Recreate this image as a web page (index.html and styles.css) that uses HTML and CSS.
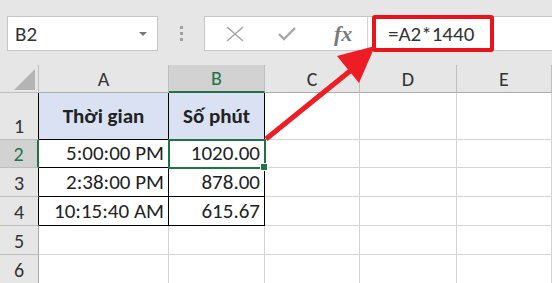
FILE: index.html
```html
<!DOCTYPE html>
<html lang="en">
<head>
    <meta charset="UTF-8">
    <title>Số phút</title>
    <link rel="stylesheet" href="styles.css">
</head>
<body>
    <div class="toolbar">
        <div class="name-box">
            <span>B2</span>
            <span class="caret"></span>
        </div>
        <div class="grip"><i></i><i></i><i></i></div>
        <div class="formula-bar">
            <div class="formula-icons">
                <svg class="icon" width="18" height="16" viewBox="0 0 18 16">
                    <path d="M1 1 L17 15 M17 1 L1 15" stroke="#a6a6a6" stroke-width="1.6" fill="none"/>
                </svg>
                <svg class="icon" width="18" height="16" viewBox="0 0 18 16">
                    <path d="M1 8 L6 13 L17 2" stroke="#a6a6a6" stroke-width="2.4" fill="none"/>
                </svg>
                <span class="fx">fx</span>
            </div>
            <div class="formula-input">
                <span class="formula-box">=A2*1440</span>
            </div>
        </div>
    </div>

    <div class="sheet">
        <div class="corner"><span></span></div>
        <div class="col-head">A</div>
        <div class="col-head active">B</div>
        <div class="col-head">C</div>
        <div class="col-head">D</div>
        <div class="col-head">E</div>

        <div class="row-head tall boxed">1</div>
        <div class="cell title">Thời gian</div>
        <div class="cell title">Số phút</div>
        <div class="cell"></div>
        <div class="cell"></div>
        <div class="cell"></div>

        <div class="row-head boxed active">2</div>
        <div class="cell data">5:00:00 PM</div>
        <div class="cell data selected">1020.00</div>
        <div class="cell"></div>
        <div class="cell"></div>
        <div class="cell"></div>

        <div class="row-head boxed">3</div>
        <div class="cell data">2:38:00 PM</div>
        <div class="cell data">878.00</div>
        <div class="cell"></div>
        <div class="cell"></div>
        <div class="cell"></div>

        <div class="row-head boxed">4</div>
        <div class="cell data">10:15:40 AM</div>
        <div class="cell data">615.67</div>
        <div class="cell"></div>
        <div class="cell"></div>
        <div class="cell"></div>

        <div class="row-head">5</div>
        <div class="cell"></div>
        <div class="cell"></div>
        <div class="cell"></div>
        <div class="cell"></div>
        <div class="cell"></div>

        <div class="row-head">6</div>
        <div class="cell"></div>
        <div class="cell"></div>
        <div class="cell"></div>
        <div class="cell"></div>
        <div class="cell"></div>
    </div>

    <!-- annotation arrow from B2 up to the formula -->
    <svg class="arrow" width="552" height="283" viewBox="0 0 552 283">
        <line x1="266" y1="139" x2="350" y2="71" stroke="#ee1c24" stroke-width="5"/>
        <polygon points="375,46 337,56 359,83" fill="#ee1c24"/>
    </svg>
</body>
</html>
```

FILE: styles.css
```css
body {
    margin: 0;
    width: 552px;
    height: 283px;
    overflow: hidden;
    position: relative;
    background-color: #e6e6e6;
    font-family: Calibri, "Lato", "Open Sans", sans-serif;
    color: #222;
}

/* top bar: name box + formula bar */
.toolbar {
    height: 65px;
    display: flex;
    align-items: flex-start;
    padding-top: 16px;
    box-sizing: border-box;
}

.name-box {
    margin-left: 7px;
    width: 151px;
    height: 35px;
    box-sizing: border-box;
    background-color: #fff;
    border: 1px solid #c6c6c6;
    display: flex;
    align-items: center;
    justify-content: space-between;
    padding: 0 10px 0 7px;
    font-size: 21px;
    color: #333;
}

.caret {
    width: 0;
    height: 0;
    border-left: 4px solid transparent;
    border-right: 4px solid transparent;
    border-top: 4px solid #777;
}

.grip {
    width: 46px;
    height: 35px;
    display: flex;
    flex-direction: column;
    align-items: center;
    justify-content: center;
    gap: 3px;
}

.grip i {
    width: 3px;
    height: 3px;
    background-color: #a0a0a0;
}

.formula-bar {
    flex: 1;
    height: 35px;
    box-sizing: border-box;
    background-color: #fff;
    border: 1px solid #c6c6c6;
    border-right: none;
    display: flex;
}

.formula-icons {
    width: 163px;
    display: flex;
    align-items: center;
    padding-left: 21px;
    gap: 34px;
    border-right: 1px solid #d4d4d4;
    box-sizing: border-box;
}

.fx {
    font-family: "Liberation Serif", serif;
    font-style: italic;
    font-weight: bold;
    font-size: 22px;
    color: #7a7a7a;
    margin-left: 4px;
}

.formula-input {
    flex: 1;
    display: flex;
    align-items: center;
    padding-left: 4px;
}

.formula-box {
    height: 37px;
    width: 122px;
    box-sizing: border-box;
    border: 4px solid #e8141b;
    border-radius: 3px;
    display: flex;
    align-items: center;
    padding-left: 12px;
    font-size: 21px;
    color: #333;
}

/* worksheet grid */
.sheet {
    display: grid;
    grid-template-columns: 39px 130px 96px 95px 97px 95px;
    grid-template-rows: 28px 47px 28px 29px 29px 29px 29px;
    font-size: 21px;
}

.corner {
    border-right: 1px solid #bdbdbd;
    border-bottom: 1px solid #bdbdbd;
    display: flex;
    align-items: flex-end;
    justify-content: flex-end;
    padding: 0 3px 2px 0;
}

.corner span {
    width: 0;
    height: 0;
    border-left: 21px solid transparent;
    border-bottom: 21px solid #b4b4b4;
}

.col-head {
    border-right: 1px solid #bdbdbd;
    border-bottom: 1px solid #ababab;
    display: flex;
    align-items: center;
    justify-content: center;
    color: #333;
    font-size: 20px;
}

.col-head.active {
    background-color: #d2d2d2;
    color: #217346;
    border-bottom: 2px solid #217346;
}

.row-head {
    border-right: 1px solid #ababab;
    border-bottom: 1px solid #bdbdbd;
    display: flex;
    align-items: flex-end;
    justify-content: center;
    color: #333;
    font-size: 20px;
    padding-bottom: 1px;
}

.row-head.boxed {
    border-right-color: #000;
}

.row-head.active {
    background-color: #d2d2d2;
    color: #217346;
    border-right: 2px solid #217346;
}

.cell {
    background-color: #fff;
    border-right: 1px solid #d4d4d4;
    border-bottom: 1px solid #d4d4d4;
    display: flex;
    align-items: flex-end;
    padding: 0 4px 1px 4px;
}

.cell.title {
    background-color: #d9e1f2;
    font-weight: bold;
    justify-content: center;
    align-items: center;
    border-right-color: #000;
    border-bottom-color: #000;
}

.cell.data {
    justify-content: flex-end;
    border-right-color: #000;
    border-bottom-color: #000;
}

.cell.selected {
    position: relative;
    outline: 2px solid #217346;
    outline-offset: -1px;
}

.cell.selected::after {
    content: "";
    position: absolute;
    right: -4px;
    bottom: -4px;
    width: 6px;
    height: 6px;
    background-color: #217346;
    border: 1px solid #fff;
}

.arrow {
    position: absolute;
    top: 0;
    left: 0;
}
```
